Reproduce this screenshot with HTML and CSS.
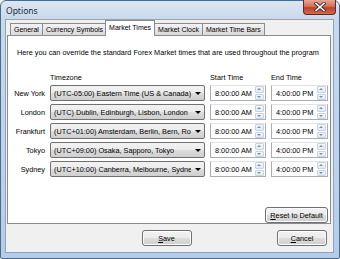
FILE: index.html
```html
<!DOCTYPE html>
<html lang="en">
<head>
  <meta charset="UTF-8" />
  <title>Options</title>
  <link rel="stylesheet" href="styles.css">
</head>
<body>
  <div class="window">
    <div class="titlebar">
      <span class="title">Options</span>
      <div class="close">
        <svg width="12" height="10" viewBox="0 0 12 10">
          <path d="M2 1.5 L10 8.5 M10 1.5 L2 8.5" stroke="#3a2a2a" stroke-width="3.2" stroke-linecap="square"/>
          <path d="M2 1.5 L10 8.5 M10 1.5 L2 8.5" stroke="#ffffff" stroke-width="1.6" stroke-linecap="square"/>
        </svg>
      </div>
    </div>

    <div class="client">
      <div class="tabs">
        <div class="tab">General</div>
        <div class="tab">Currency Symbols</div>
        <div class="tab active">Market Times</div>
        <div class="tab">Market Clock</div>
        <div class="tab">Market Time Bars</div>
      </div>

      <div class="page">
        <p class="intro">Here you can override the standard Forex Market times that are used throughout the program</p>

        <div class="grid">
          <span></span>
          <span class="head">Timezone</span>
          <span class="head">Start Time</span>
          <span class="head">End Time</span>

          <span class="lbl">New York</span>
          <div class="combo"><span class="combo-text">(UTC-05:00) Eastern Time (US &amp; Canada)</span><i class="arrow"></i></div>
          <div class="picker"><span>8:00:00 AM</span><div class="spin"><i class="up"></i><i class="down"></i></div></div>
          <div class="picker"><span>4:00:00 PM</span><div class="spin"><i class="up"></i><i class="down"></i></div></div>

          <span class="lbl">London</span>
          <div class="combo"><span class="combo-text">(UTC) Dublin, Edinburgh, Lisbon, London</span><i class="arrow"></i></div>
          <div class="picker"><span>8:00:00 AM</span><div class="spin"><i class="up"></i><i class="down"></i></div></div>
          <div class="picker"><span>4:00:00 PM</span><div class="spin"><i class="up"></i><i class="down"></i></div></div>

          <span class="lbl">Frankfurt</span>
          <div class="combo"><span class="combo-text">(UTC+01:00) Amsterdam, Berlin, Bern, Ro</span><i class="arrow"></i></div>
          <div class="picker"><span>8:00:00 AM</span><div class="spin"><i class="up"></i><i class="down"></i></div></div>
          <div class="picker"><span>4:00:00 PM</span><div class="spin"><i class="up"></i><i class="down"></i></div></div>

          <span class="lbl">Tokyo</span>
          <div class="combo"><span class="combo-text">(UTC+09:00) Osaka, Sapporo, Tokyo</span><i class="arrow"></i></div>
          <div class="picker"><span>8:00:00 AM</span><div class="spin"><i class="up"></i><i class="down"></i></div></div>
          <div class="picker"><span>4:00:00 PM</span><div class="spin"><i class="up"></i><i class="down"></i></div></div>

          <span class="lbl">Sydney</span>
          <div class="combo"><span class="combo-text">(UTC+10:00) Canberra, Melbourne, Sydne</span><i class="arrow"></i></div>
          <div class="picker"><span>8:00:00 AM</span><div class="spin"><i class="up"></i><i class="down"></i></div></div>
          <div class="picker"><span>4:00:00 PM</span><div class="spin"><i class="up"></i><i class="down"></i></div></div>
        </div>

        <div class="reset-row">
          <button class="btn reset"><u>R</u>eset to Default</button>
        </div>
      </div>

      <div class="footer">
        <span></span>
        <button class="btn save"><u>S</u>ave</button>
        <button class="btn cancel"><u>C</u>ancel</button>
      </div>
    </div>
  </div>
</body>
</html>
```

FILE: styles.css
```css
* {
  box-sizing: border-box;
}
body {
  margin: 0;
  font-family: 'Liberation Sans', Arial, sans-serif;
  font-size: 7.3px;
  color: #000;
  background: #ffffff;
}
.window {
  position: relative;
  width: 340px;
  height: 259px;
  display: flex;
  flex-direction: column;
  border: 1px solid #4a6a8e;
  border-radius: 6px 6px 2px 2px;
  background: linear-gradient(#dce6f2, #c8d9ec 18px, #bfd2ea 60%, #b6cce6);
}
.titlebar {
  height: 18px;
  padding-left: 5px;
  display: flex;
  align-items: center;
}
.title {
  font-family: 'Noto Sans', sans-serif;
  font-size: 8.5px;
  color: #1b2a3c;
}
.close {
  position: absolute;
  top: -1px;
  right: 3px;
  width: 33px;
  height: 15px;
  border: 1px solid #5e2a22;
  border-top: none;
  border-radius: 0 0 4px 4px;
  background: linear-gradient(#e8a593, #d4705a 45%, #c0412a 55%, #d16a4c);
  display: flex;
  align-items: center;
  justify-content: center;
}
.client {
  flex: 1;
  margin: 0 5px 5px 4px;
  background: #f0f0f0;
  border: 1px solid #8ea4be;
  display: flex;
  flex-direction: column;
}
.tabs {
  display: flex;
  align-items: flex-end;
  height: 15px;
  padding-left: 4px;
  font-size: 7px;
}
.tab {
  height: 12px;
  padding: 0 3px;
  margin-right: -1px;
  border: 1px solid #898c95;
  border-bottom: none;
  background: linear-gradient(#f3f3f3, #e6e6e6 50%, #dadada);
  line-height: 11px;
  white-space: nowrap;
}
.tab.active {
  margin: 0 -1px -1px -1px;
  padding: 0 3px;
  background: #ffffff;
  position: relative;
  z-index: 1;
  height: 16px;
  line-height: 13px;
}
.page {
  height: 189px;
  margin: 0 2px 0 1px;
  background: #ffffff;
  border: 1px solid #898c95;
  padding: 12px 0 0 0;
}
.intro {
  margin: 0 0 15px 9px;
  line-height: 10px;
  white-space: nowrap;
}
.grid {
  display: grid;
  grid-template-columns: 37px 155px 56px 57px;
  column-gap: 5px;
  row-gap: 3px;
  align-items: center;
}
.head {
  line-height: 10px;
  margin-bottom: -1px;
}
.lbl {
  text-align: right;
  white-space: nowrap;
}
.combo {
  height: 16px;
  display: flex;
  align-items: center;
  border: 1px solid #707070;
  border-radius: 2px;
  background: linear-gradient(#f2f2f2, #ebebeb 50%, #dddddd 51%, #cfcfcf);
  padding-left: 3px;
  min-width: 0;
}
.combo-text {
  flex: 1;
  min-width: 0;
  overflow: hidden;
  white-space: nowrap;
}
.arrow {
  flex: none;
  width: 13px;
  height: 100%;
  position: relative;
}
.arrow::after {
  content: "";
  position: absolute;
  left: 4px;
  top: 6px;
  border-left: 3px solid transparent;
  border-right: 3px solid transparent;
  border-top: 3px solid #000;
}
.picker {
  height: 16px;
  display: flex;
  align-items: center;
  border: 1px solid #abadb3;
  border-top-color: #e2e3ea;
  background: #ffffff;
  padding-left: 4px;
}
.picker span {
  flex: 1;
  min-width: 0;
  white-space: nowrap;
  overflow: hidden;
}
.spin {
  width: 9px;
  height: 14px;
  margin-right: 1px;
  display: flex;
  flex-direction: column;
  gap: 1px;
}
.spin i {
  flex: 1;
  position: relative;
  border: 1px solid #c6d3e2;
  background: linear-gradient(#f4f7fb, #e4ebf3);
  border-radius: 1px;
}
.spin i::after {
  content: "";
  position: absolute;
  left: 1px;
  border-left: 2.5px solid transparent;
  border-right: 2.5px solid transparent;
}
.spin .up::after {
  top: 1px;
  border-bottom: 2.5px solid #7b8fa8;
}
.spin .down::after {
  top: 1px;
  border-top: 2.5px solid #7b8fa8;
}
.reset-row {
  display: flex;
  justify-content: flex-end;
  padding-right: 2px;
  margin-top: 30px;
}
.btn {
  font-family: inherit;
  font-size: 7.3px;
  color: #000;
  height: 16px;
  padding: 0;
  border: 1px solid #707070;
  border-radius: 3px;
  background: linear-gradient(#f2f2f2, #ebebeb 50%, #dddddd 51%, #cfcfcf);
  box-shadow: inset 0 0 0 1px #fcfcfc;
}
.reset {
  width: 63px;
}
.footer {
  flex: 1;
  display: grid;
  grid-template-columns: 1fr 50px 1fr;
  align-items: center;
  padding: 0 6px 0 0;
}
.save {
  width: 50px;
}
.cancel {
  width: 50px;
  justify-self: end;
}
```
